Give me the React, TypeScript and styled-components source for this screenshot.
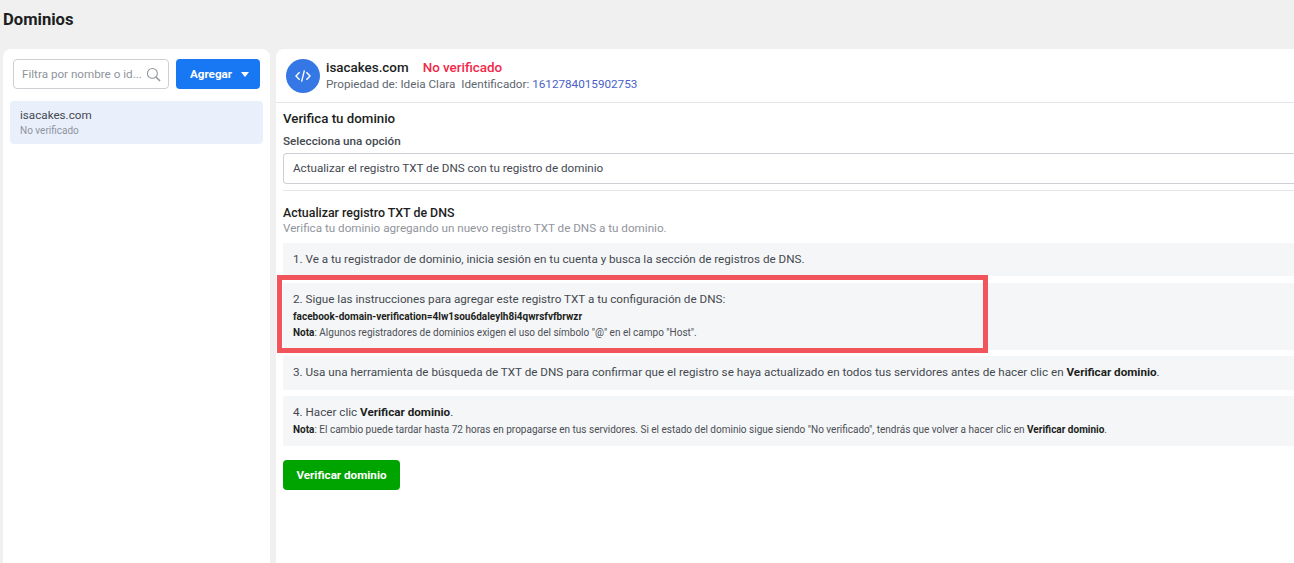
import React from "react"
import styled, { createGlobalStyle } from "styled-components"

const GlobalStyle = createGlobalStyle`
  html, body {
    margin: 0;
    height: 563px;
    overflow: hidden;
    background: #f0f0f0;
    font-family: Roboto, "Liberation Sans", sans-serif;
    color: #1c1e21;
  }
  * { box-sizing: border-box; }
`

const Page = styled.div`
  width: 1294px;
  height: 563px;
  overflow: hidden;
  padding-left: 3px;
`
const PageTitle = styled.h1`
  margin: 0;
  height: 49px;
  padding-top: 10px;
  font-size: 16.6px;
  line-height: 20px;
  font-weight: 700;
`
const Columns = styled.div`
  display: flex;
  gap: 6px;
  height: 514px;
`
const Sidebar = styled.aside`
  flex: 0 0 267px;
  background: #fff;
  border-radius: 8px 8px 0 0;
  padding: 10px 7px;
`
const SidebarTools = styled.div`
  display: flex;
  gap: 7px;
  padding: 0 3px;
  margin-bottom: 12px;
`
const SearchBox = styled.div`
  flex: 0 0 156px;
  height: 30px;
  display: flex;
  align-items: center;
  justify-content: space-between;
  padding: 0 7px 0 8px;
  border: 1px solid #ccd0d5;
  border-radius: 4px;
  font-size: 11.66px;
  color: #90949c;
  white-space: nowrap;
`
const AddButton = styled.button`
  flex: 0 0 84px;
  height: 30px;
  display: flex;
  align-items: center;
  justify-content: center;
  gap: 9px;
  padding: 0 0 0 3px;
  border: 0;
  border-radius: 4px;
  background: #1877f2;
  color: #fff;
  font: 700 11.66px Roboto, sans-serif;
`
const Caret = styled.span`
  width: 0;
  height: 0;
  border-left: 4.5px solid transparent;
  border-right: 4.5px solid transparent;
  border-top: 5px solid #fff;
`
const DomainItem = styled.div`
  height: 43px;
  padding: 7px 10px;
  border-radius: 4px;
  background: #e9f0fc;
`
const DomainName = styled.div`
  font-size: 11.66px;
  line-height: 15px;
  color: #444950;
`
const DomainStatus = styled.div`
  margin-top: 1px;
  font-size: 10px;
  line-height: 14px;
  color: #8d949e;
`
const Main = styled.main`
  width: 1040px;
  flex: none;
  background: #fff;
  border-radius: 8px 0 0 0;
`
const Header = styled.header`
  height: 54px;
  display: flex;
  align-items: center;
  gap: 6px;
  padding: 0 10px;
  border-bottom: 1px solid #e4e6e9;
`
const CodeBadge = styled.div`
  width: 34px;
  height: 34px;
  display: flex;
  align-items: center;
  justify-content: center;
  border-radius: 50%;
  background: #3578e5;
`
const HeaderName = styled.div`
  font-size: 13.4px;
  line-height: 16px;
  font-weight: 500;
  color: #1c1e21;
  display: flex;
  gap: 14px;
`
const Unverified = styled.span`
  color: #f02849;
`
const HeaderMeta = styled.div`
  font-size: 11.7px;
  line-height: 16px;
  color: #606770;
`
const IdLink = styled.span`
  color: #4a5fc9;
`
const Body = styled.div`
  padding: 7px 7px 8px;
`
const SectionTitle = styled.h2`
  margin: 0 0 6px;
  font-size: 13.3px;
  line-height: 17px;
  font-weight: 500;
`
const FieldLabel = styled.div`
  font-size: 11.7px;
  line-height: 16px;
  font-weight: 500;
  color: #444950;
  margin-bottom: 4px;
`
const SelectBox = styled.div`
  height: 31px;
  line-height: 29px;
  padding: 0 9px;
  border: 1px solid #ccd0d5;
  border-radius: 4px 0 0 4px;
  border-right: 0;
  font-size: 11.66px;
  color: #444950;
`
const Divider = styled.hr`
  margin: 6px 0 14px;
  border: 0;
  border-top: 1px solid #e4e6e9;
`
const SubTitle = styled.h3`
  margin: 0 0 1px;
  font-size: 12.4px;
  line-height: 15px;
  font-weight: 500;
`
const SubText = styled.p`
  margin: 0 0 7px;
  font-size: 11.66px;
  line-height: 15px;
  color: #90949c;
`
const Steps = styled.ol`
  list-style: none;
  margin: 0;
  padding: 0;
  display: flex;
  flex-direction: column;
  gap: 6.5px;
`
const Step = styled.li<{ $height: number }>`
  position: relative;
  height: ${props => props.$height}px;
  padding: 8px 10px 0;
  background: #f5f6f7;
  font-size: 11.66px;
  line-height: 16px;
  color: #444950;
  strong {
    color: #1c1e21;
    font-weight: 700;
  }
`
const TxtValue = styled.div`
  font-size: 10px;
  line-height: 13px;
  margin-top: 3px;
  font-weight: 700;
  color: #1c1e21;
`
const Note = styled.div`
  font-size: 10px;
  line-height: 13px;
  margin-top: 3px;
  color: #4b4f56;
  strong {
    color: #1c1e21;
  }
`
const Highlight = styled.div`
  position: absolute;
  left: -6px;
  top: -8px;
  width: 711px;
  height: 78px;
  border: 5px solid #f2545b;
  pointer-events: none;
`
const VerifyButton = styled.button`
  display: block;
  margin-top: 14px;
  width: 117px;
  height: 30px;
  border: 0;
  border-radius: 4px;
  background: #00a400;
  color: #fff;
  font: 700 11.66px Roboto, sans-serif;
`

export default function App() {
  return (
    <Page>
      <GlobalStyle />
      <PageTitle>Dominios</PageTitle>
      <Columns>
        <Sidebar>
          <SidebarTools>
            <SearchBox>
              Filtra por nombre o id...
              <svg width="15" height="15" viewBox="0 0 16 16" fill="none" stroke="#90949c" strokeWidth="1.1">
                <circle cx="6.8" cy="6.8" r="5.3" />
                <path d="M10.6 10.6 15 15" strokeWidth="1.6" />
              </svg>
            </SearchBox>
            <AddButton>
              Agregar
              <Caret />
            </AddButton>
          </SidebarTools>
          <DomainItem>
            <DomainName>isacakes.com</DomainName>
            <DomainStatus>No verificado</DomainStatus>
          </DomainItem>
        </Sidebar>
        <Main>
          <Header>
            <CodeBadge>
              <svg width="16" height="14" viewBox="0 0 16 14" fill="none" stroke="#fff" strokeWidth="1.4">
                <path d="M4.6 3.2 1 7l3.6 3.8M11.4 3.2 15 7l-3.6 3.8M9.4 1.4 6.6 12.6" />
              </svg>
            </CodeBadge>
            <div>
              <HeaderName>
                isacakes.com
                <Unverified>No verificado</Unverified>
              </HeaderName>
              <HeaderMeta>
                Propiedad de: Ideia Clara&nbsp; Identificador: <IdLink>1612784015902753</IdLink>
              </HeaderMeta>
            </div>
          </Header>
          <Body>
            <SectionTitle>Verifica tu dominio</SectionTitle>
            <FieldLabel>Selecciona una opción</FieldLabel>
            <SelectBox>Actualizar el registro TXT de DNS con tu registro de dominio</SelectBox>
            <Divider />
            <SubTitle>Actualizar registro TXT de DNS</SubTitle>
            <SubText>Verifica tu dominio agregando un nuevo registro TXT de DNS a tu dominio.</SubText>
            <Steps>
              <Step $height={33}>1. Ve a tu registrador de dominio, inicia sesión en tu cuenta y busca la sección de registros de DNS.</Step>
              <Step $height={67}>
                2. Sigue las instrucciones para agregar este registro TXT a tu configuración de DNS:
                <TxtValue>facebook-domain-verification=4lw1sou6daleylh8i4qwrsfvfbrwzr</TxtValue>
                <Note>
                  <strong>Nota</strong>: Algunos registradores de dominios exigen el uso del símbolo "@" en el campo "Host".
                </Note>
                <Highlight />
              </Step>
              <Step $height={33.5}>
                3. Usa una herramienta de búsqueda de TXT de DNS para confirmar que el registro se haya actualizado en todos tus servidores antes de hacer clic en <strong>Verificar dominio</strong>.
              </Step>
              <Step $height={50}>
                4. Hacer clic <strong>Verificar dominio</strong>.
                <Note>
                  <strong>Nota</strong>: El cambio puede tardar hasta 72 horas en propagarse en tus servidores. Si el estado del dominio sigue siendo "No verificado", tendrás que volver a hacer clic en <strong>Verificar dominio</strong>.
                </Note>
              </Step>
            </Steps>
            <VerifyButton>Verificar dominio</VerifyButton>
          </Body>
        </Main>
      </Columns>
    </Page>
  )
}
